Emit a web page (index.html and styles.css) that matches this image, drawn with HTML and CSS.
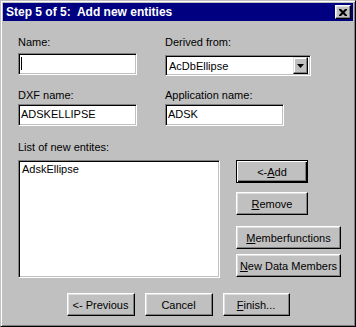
FILE: index.html
```html
<!DOCTYPE html>
<html lang="en">
<head>
  <meta charset="UTF-8" />
  <title>Step 5 of 5: Add new entities</title>
  <link rel="stylesheet" href="styles.css">
</head>
<body>

<div class="window">
  <div class="titlebar">
    <span class="title">Step 5 of 5:  Add new entities</span>
    <button class="close" type="button">
      <svg width="8" height="7" viewBox="0 0 8 7">
        <path d="M0 0h2l2 2 2-2h2v1l-2.5 2.5L8 6v1H6L4 5 2 7H0V6l2.5-2.5L0 1z" fill="#000"/>
      </svg>
    </button>
  </div>

  <div class="content">
    <div class="fields">
      <div class="field name">
        <label>Name:</label>
        <div class="edit"><span class="caret"></span></div>
      </div>
      <div class="field derived">
        <label>Derived from:</label>
        <div class="combo">
          <span class="combo-text">AcDbEllipse</span>
          <span class="drop">
            <svg width="7" height="4" viewBox="0 0 7 4"><path d="M0 0h7L3.5 4z" fill="#000"/></svg>
          </span>
        </div>
      </div>
      <div class="field dxf">
        <label>DXF name:</label>
        <div class="edit">ADSKELLIPSE</div>
      </div>
      <div class="field app">
        <label>Application name:</label>
        <div class="edit">ADSK</div>
      </div>
    </div>

    <label class="list-label">List of new entites:</label>
    <div class="list-row">
      <div class="listbox">
        <div class="item">AdskEllipse</div>
      </div>
      <div class="side">
        <button class="btn default small" type="button">&lt;-<u>A</u>dd</button>
        <button class="btn small remove" type="button"><u>R</u>emove</button>
        <button class="btn wide members" type="button"><u>M</u>emberfunctions</button>
        <button class="btn wide data" type="button"><u>N</u>ew Data Members</button>
      </div>
    </div>

    <div class="footer">
      <button class="btn nav" type="button">&lt;- Previous</button>
      <button class="btn nav" type="button">Cancel</button>
      <button class="btn nav finish" type="button"><u>F</u>inish...</button>
    </div>
  </div>
</div>

</body>
</html>
```

FILE: styles.css
```css
body {
  margin: 0;
  padding: 0;
  background: #c0c0c0;
  font-family: "Liberation Sans", Arial, sans-serif;
  font-size: 11px;
  color: #000;
}
.window {
  width: 356px;
  height: 327px;
  box-sizing: border-box;
  background: #c0c0c0;
  border: 1px solid;
  border-color: #c0c0c0 #000 #000 #c0c0c0;
  box-shadow: inset 1px 1px #fff, inset -1px -1px #808080;
  padding: 2px;
}
.titlebar {
  height: 18px;
  background: #000080;
  display: flex;
  align-items: center;
  justify-content: space-between;
  padding: 0 2px 0 3px;
}
.title {
  color: #fff;
  font-weight: bold;
  font-size: 12px;
  white-space: pre;
}
.close {
  width: 16px;
  height: 14px;
  padding: 0;
  background: #c0c0c0;
  border: 1px solid;
  border-color: #fff #000 #000 #fff;
  box-shadow: inset -1px -1px #808080, inset 1px 1px #dfdfdf;
  display: flex;
  align-items: center;
  justify-content: center;
}
.content {
  padding: 15px 15px 0 15px;
}
.fields {
  display: grid;
  grid-template-columns: 119px 146px;
  column-gap: 28px;
  row-gap: 13px;
}
label {
  display: block;
  line-height: 13px;
}
.name label { margin-bottom: 4px; }
.derived label { margin-bottom: 6px; }
.dxf label, .app label { margin-bottom: 2px; }

.edit, .combo, .listbox {
  box-sizing: border-box;
  background: #fff;
  border: 1px solid;
  border-color: #808080 #fff #fff #808080;
  box-shadow: inset 1px 1px #000, inset -1px -1px #c0c0c0;
}
.edit {
  width: 119px;
  height: 22px;
  padding: 0 2px;
  line-height: 19px;
}
.caret {
  display: inline-block;
  width: 1px;
  height: 13px;
  background: #000;
  vertical-align: -3px;
}
.combo {
  height: 21px;
  display: flex;
  align-items: center;
  justify-content: space-between;
  padding: 2px;
}
.combo-text {
  padding-left: 1px;
}
.drop {
  width: 15px;
  height: 17px;
  box-sizing: border-box;
  background: #c0c0c0;
  border: 1px solid;
  border-color: #dfdfdf #000 #000 #dfdfdf;
  box-shadow: inset -1px -1px #808080, inset 1px 1px #fff;
  display: flex;
  align-items: center;
  justify-content: center;
}
.list-label {
  margin-top: 15px;
  margin-bottom: 6px;
}
.list-row {
  display: flex;
  gap: 16px;
}
.listbox {
  width: 202px;
  height: 118px;
  flex-shrink: 0;
  padding: 2px 3px;
}
.item {
  line-height: 13px;
}
.side {
  display: flex;
  flex-direction: column;
  flex-shrink: 0;
}
.btn {
  box-sizing: border-box;
  height: 23px;
  padding: 0;
  background: #c0c0c0;
  font-family: inherit;
  font-size: 11px;
  color: #000;
  border: 1px solid;
  border-color: #fff #000 #000 #fff;
  box-shadow: inset -1px -1px #808080, inset 1px 1px #dfdfdf;
}
.btn.default {
  border-color: #000;
  box-shadow: inset 1px 1px #fff, inset -1px -1px #000, inset -2px -2px #808080;
}
.small { width: 72px; }
.wide { width: 105px; }
.remove { margin-top: 9px; }
.members { margin-top: 11px; }
.data { margin-top: 5px; }
.footer {
  display: flex;
  justify-content: center;
  gap: 10px;
  margin-top: 15px;
}
.nav { width: 68px; }
.finish { width: 67px; }
```
